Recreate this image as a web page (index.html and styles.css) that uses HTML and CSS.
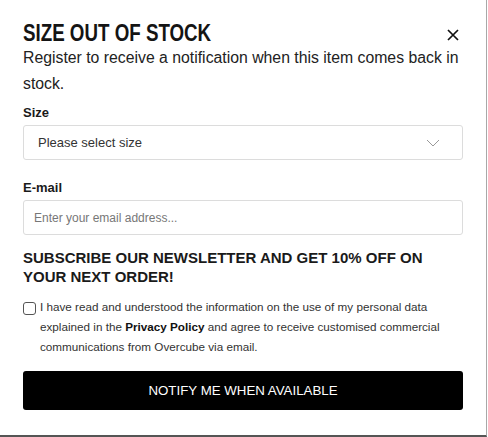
FILE: index.html
```html
<!DOCTYPE html>
<html>
<head>
<meta charset="utf-8">
<link rel="stylesheet" href="styles.css">
</head>
<body>
<div class="modal">
  <div class="head">
    <h1 class="title">SIZE OUT OF STOCK</h1>
    <button class="close" aria-label="Close">
      <svg width="12" height="12" viewBox="0 0 12 12"><path d="M1 1L11 11M11 1L1 11" stroke="#111" stroke-width="1.7" fill="none"/></svg>
    </button>
  </div>
  <p class="intro">Register to receive a notification when this item comes back in stock.</p>
  <label class="label">Size</label>
  <div class="field select">
    <span>Please select size</span>
    <svg width="14" height="8" viewBox="0 0 14 8"><path d="M1 1L7 7L13 1" stroke="#999" stroke-width="1" fill="none"/></svg>
  </div>
  <label class="label label-email">E-mail</label>
  <div class="field input"><span>Enter your email address...</span></div>
  <h2 class="promo">SUBSCRIBE OUR NEWSLETTER AND GET 10% OFF ON YOUR NEXT ORDER!</h2>
  <div class="consent">
    <span class="box"></span>
    <p>I have read and understood the information on the use of my personal data explained in the <b>Privacy Policy</b> and agree to receive customised commercial communications from Overcube via email.</p>
  </div>
  <button class="notify">NOTIFY ME WHEN AVAILABLE</button>
</div>
</body>
</html>
```
FILE: styles.css
```css
html, body { margin: 0; padding: 0; background: #fff; }
body { font-family: "Liberation Sans", Arial, sans-serif; color: #222; }
.modal {
  box-sizing: border-box;
  width: 487px;
  height: 437px;
  padding: 20px 23px 0 23px;
  border-right: 1px solid #a8a8a8;
  border-bottom: 2px solid #555;
  display: flex;
  flex-direction: column;
}
.head { display: flex; justify-content: space-between; align-items: flex-end; }
.title {
  margin: 0;
  font-family: "Liberation Sans", Arial, sans-serif;
  font-weight: 700;
  font-size: 23px;
  line-height: 26px;
  color: #141414;
  transform: scaleX(0.815);
  transform-origin: left center;
  white-space: nowrap;
}
.close { border: 0; background: none; padding: 0; margin: 0 4px 5px 0; width: 12px; height: 12px; display: flex; }
.intro { margin: -1px 0 0; font-size: 15.8px; line-height: 26px; color: #222; }
.label { display: block; font-weight: 700; font-size: 13px; line-height: 16px; margin-top: 8px; color: #1a1a1a; }
.label-email { margin-top: 20px; }
.field {
  box-sizing: border-box;
  height: 35px;
  margin-top: 4px;
  border: 1px solid #dcdcdc;
  border-radius: 3px;
  display: flex;
  align-items: center;
}
.select { justify-content: space-between; padding: 0 22px 0 14px; font-size: 13px; color: #333; }
.input { padding: 0 10px; font-size: 12px; color: #777; }
.promo { margin: 13px 0 0; font-size: 15px; line-height: 19px; font-weight: 700; color: #1a1a1a; }
.consent { display: flex; align-items: flex-start; margin-top: 11px; }
.box { flex: none; width: 11px; height: 11px; border: 1px solid #555; border-radius: 3px; margin: 5px 4px 0 0; }
.consent p { margin: 0; font-size: 11.7px; line-height: 20px; color: #333; }
.consent b { color: #111; }
.notify {
  margin-top: 14px;
  height: 39px;
  border: 0;
  border-radius: 3px;
  background: #000;
  color: #fff;
  font-family: "Liberation Sans", Arial, sans-serif;
  font-size: 13.3px;
}
```
